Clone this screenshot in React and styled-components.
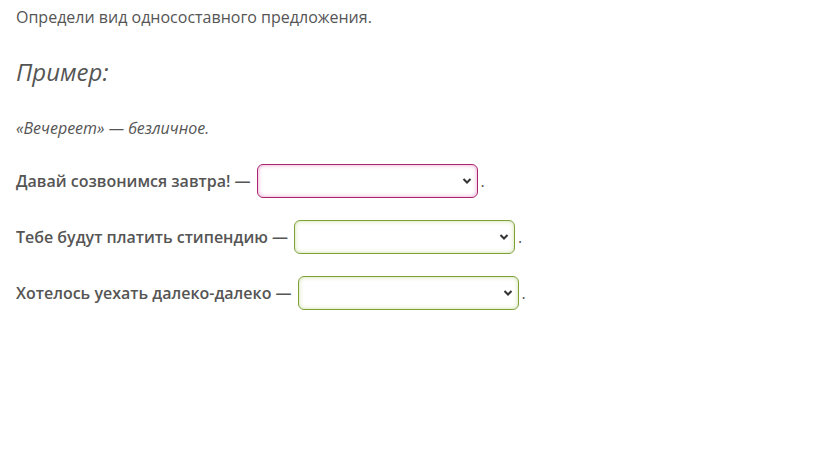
import React from "react";
import styled, { createGlobalStyle } from "styled-components";

const Global = createGlobalStyle`
  html, body { margin: 0; padding: 0; background: #fff; }
  body { font-family: "Open Sans", "Noto Sans", sans-serif; color: #555; }
`;

const Page = styled.div`
  padding: 5px 16px 0;
  display: flex;
  flex-direction: column;
`;

const Intro = styled.p`
  margin: 0;
  font-size: 16px;
  line-height: 24px;
`;

const Heading = styled.h3`
  margin: 27px 0 0;
  font-size: 24px;
  font-weight: 400;
  font-style: italic;
  line-height: 32px;
`;

const Example = styled.p`
  margin: 28px 0 0;
  font-size: 16px;
  font-style: italic;
  line-height: 24px;
`;

const Rows = styled.div`
  margin-top: 24px;
  display: flex;
  flex-direction: column;
  gap: 22px;
`;

const Row = styled.div`
  display: flex;
  align-items: center;
  font-size: 16px;
  font-weight: 600;
  line-height: 24px;
`;

const Label = styled.span`
  margin-right: 6px;
`;

const Select = styled.select`
  appearance: none;
  -webkit-appearance: none;
  width: 221px;
  height: 34px;
  border-radius: 6px;
  border: 1px solid ${(p) => (p.$error ? "#a8246e" : "#7fa13a")};
  box-shadow: inset 0 0 4px ${(p) => (p.$error ? "rgba(214, 80, 160, 0.55)" : "rgba(160, 195, 90, 0.55)")};
  background-color: #fff;
  background-image: url("data:image/svg+xml;utf8,<svg xmlns='http://www.w3.org/2000/svg' width='10' height='8' viewBox='0 0 10 8'><path d='M1.5 2l3.5 3.5L8.5 2' fill='none' stroke='%23333' stroke-width='2'/></svg>");
  background-repeat: no-repeat;
  background-position: right 5px center;
  font-family: inherit;
  font-size: 14px;
`;

const Dot = styled.span`
  margin-left: 3px;
  font-weight: 400;
`;

const rows = [
  { label: "Давай созвонимся завтра! —", error: true },
  { label: "Тебе будут платить стипендию —", error: false },
  { label: "Хотелось уехать далеко-далеко —", error: false },
];

export default function App() {
  return (
    <>
      <Global />
      <Page>
        <Intro>Определи вид односоставного предложения.</Intro>
        <Heading>Пример:</Heading>
        <Example>«Вечереет» — безличное.</Example>
        <Rows>
          {rows.map((r) => (
            <Row key={r.label}>
              <Label>{r.label}</Label>
              <Select $error={r.error} defaultValue="">
                <option value=""></option>
              </Select>
              <Dot>.</Dot>
            </Row>
          ))}
        </Rows>
      </Page>
    </>
  );
}
